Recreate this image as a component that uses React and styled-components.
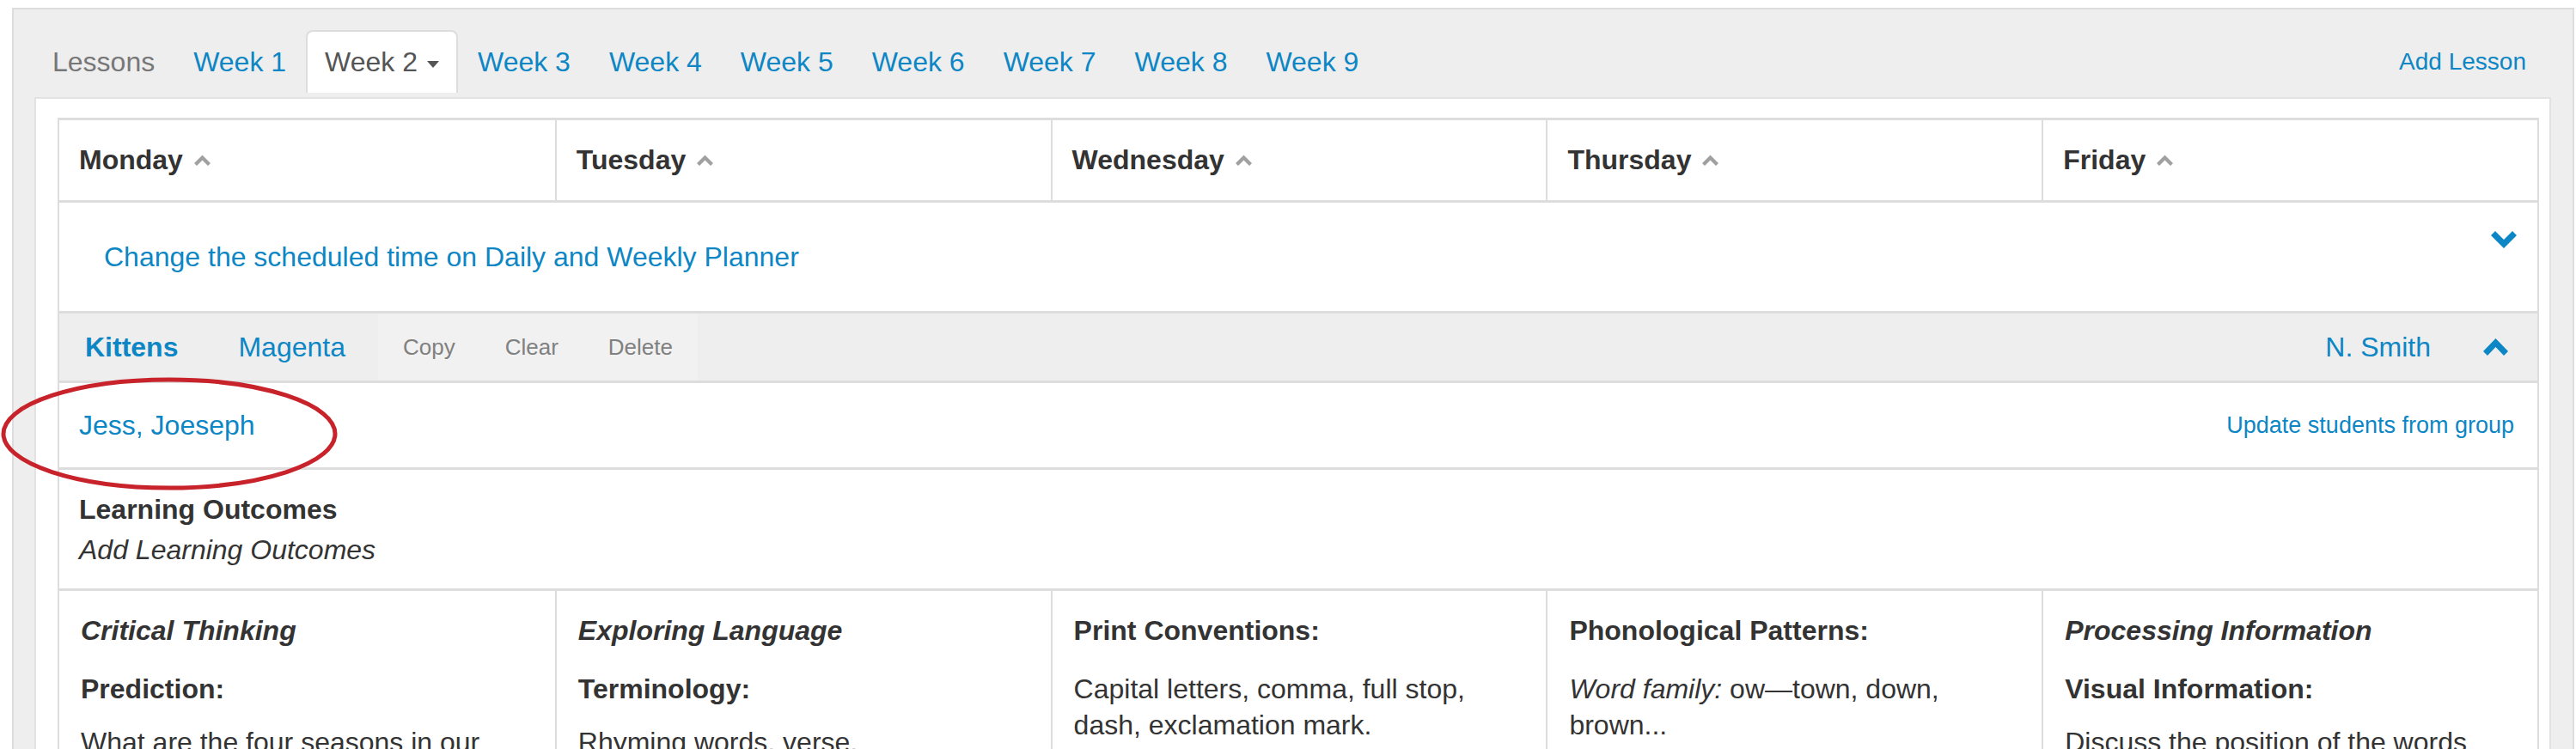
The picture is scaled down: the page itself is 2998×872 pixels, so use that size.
import React from "react";
import styled, { createGlobalStyle } from "styled-components";

const GlobalStyle = createGlobalStyle`
  *, *::before, *::after {
    box-sizing: border-box;
  }
  html, body {
    margin: 0;
    padding: 0;
    background: #ffffff;
    overflow: hidden;
  }
  body {
    font-family: "Liberation Sans", Arial, Helvetica, sans-serif;
    color: #333333;
  }
`;

const BLUE = "#0c86c4";

const Page = styled.div`
  position: relative;
  height: 872px;
  overflow: hidden;
  padding: 9px 2px 0 14px;
`;

const Well = styled.div`
  min-height: 100%;
  background: #eeeeee;
  border: 2px solid #dddddd;
  border-bottom: none;
  padding-top: 24px;
`;

const TabBar = styled.ul`
  display: flex;
  align-items: stretch;
  height: 73px;
  margin: 0 0 5px;
  padding: 0 54px 0 23px;
  list-style: none;
`;

const Tab = styled.li`
  display: flex;
  align-items: center;
  padding: 0 20px;
  margin-right: 1px;
  border: 2px solid ${(p) => (p.$active ? "#dddddd" : "transparent")};
  border-bottom: none;
  border-radius: 8px 8px 0 0;
  background: ${(p) => (p.$active ? "#ffffff" : "transparent")};
  font-size: 32px;
  color: ${(p) => (p.$active ? "#555555" : p.$muted ? "#777777" : BLUE)};
`;

const Caret = styled.span`
  display: inline-block;
  margin: 4px 0 0 11px;
  border-top: 8px solid #555555;
  border-left: 7px solid transparent;
  border-right: 7px solid transparent;
`;

const AddLesson = styled.li`
  margin-left: auto;
  display: flex;
  align-items: center;
  font-size: 28px;
  color: ${BLUE};
`;

const Panel = styled.div`
  background: #ffffff;
  border: 2px solid #e2e2e2;
  border-bottom: none;
  margin: 0 25px 0 24px;
  padding: 22px 12px 0 25px;
`;

const Planner = styled.div`
  border: 2px solid #dddddd;
  border-top-width: 3px;
`;

const DayHeader = styled.div`
  display: grid;
  grid-template-columns: repeat(5, 1fr);
  height: 93px;
`;

const DayCell = styled.div`
  display: flex;
  align-items: center;
  gap: 13px;
  padding: 0 23px;
  font-size: 32px;
  font-weight: bold;
  color: #333333;
  & + & {
    border-left: 2px solid #dddddd;
  }
`;

const ScheduleRow = styled.div`
  display: flex;
  align-items: center;
  justify-content: space-between;
  height: 129px;
  border-top: 3px solid #dddddd;
  padding: 0 24px 0 52px;
  font-size: 32px;
  color: ${BLUE};
`;

const Toggle = styled.span`
  align-self: flex-start;
  margin-top: 32px;
  display: flex;
`;

const GroupBar = styled.div`
  display: flex;
  align-items: stretch;
  height: 81px;
  border-top: 3px solid #dddddd;
  background: #eeeeee;
  padding: 0 34px 0 30px;
  font-size: 32px;
  color: ${BLUE};
`;

const GroupName = styled.span`
  display: flex;
  align-items: center;
  font-weight: ${(p) => (p.$strong ? "bold" : "normal")};
  margin-right: ${(p) => p.$gap}px;
`;

const Actions = styled.div`
  display: flex;
  background: #f1f1f1;
`;

const ActionButton = styled.span`
  display: flex;
  align-items: center;
  padding: 0 29px;
  font-size: 26px;
  color: #808080;
`;

const Teacher = styled.span`
  margin-left: auto;
  display: flex;
  align-items: center;
  gap: 61px;
`;

const StudentsRow = styled.div`
  display: flex;
  align-items: center;
  justify-content: space-between;
  height: 101px;
  border-top: 3px solid #dddddd;
  padding: 0 27px 0 23px;
  font-size: 32px;
  color: ${BLUE};
`;

const SmallLink = styled.span`
  font-size: 27px;
`;

const OutcomesRow = styled.div`
  height: 141px;
  border-top: 3px solid #dddddd;
  padding: 25px 23px 0;
  font-size: 32px;
  line-height: 42px;
`;

const OutcomesTitle = styled.div`
  font-weight: bold;
  margin-bottom: 5px;
`;

const LessonGrid = styled.div`
  display: grid;
  grid-template-columns: repeat(5, 1fr);
  border-top: 3px solid #dddddd;
`;

const LessonCell = styled.div`
  padding: 25px 25px 40px;
  font-size: 32px;
  line-height: 42px;
  color: #333333;
  & + & {
    border-left: 2px solid #dddddd;
  }
`;

const Strand = styled.p`
  margin: 0 0 26px;
  font-weight: bold;
  font-style: ${(p) => (p.$italic ? "italic" : "normal")};
`;

const Focus = styled.p`
  margin: 0 0 20px;
  font-weight: bold;
`;

const Body = styled.p`
  margin: 0;
`;

const Annotation = styled.svg`
  position: absolute;
  left: 0;
  top: 438px;
  pointer-events: none;
`;

const SortArrow = () => (
  <svg width="19" height="15" viewBox="0 0 19 15">
    <polygon points="0,11 9.5,1.5 19,11 16,14 9.5,7.5 3,14" fill="#a0a0a0" />
  </svg>
);

const ChevronDown = () => (
  <svg width="30" height="21" viewBox="0 0 30 21">
    <polygon points="0,6 5,1 15,11 25,1 30,6 15,21" fill={BLUE} />
  </svg>
);

const ChevronUp = () => (
  <svg width="29" height="21" viewBox="0 0 29 21">
    <polygon points="0,15 14.5,0 29,15 24,20 14.5,10 5,20" fill={BLUE} />
  </svg>
);

const days = ["Monday", "Tuesday", "Wednesday", "Thursday", "Friday"];
const weeks = [1, 2, 3, 4, 5, 6, 7, 8, 9];

export default function App() {
  return (
    <Page>
      <GlobalStyle />
      <Well>
        <TabBar>
          <Tab $muted>Lessons</Tab>
          {weeks.map((w) => (
            <Tab key={w} $active={w === 2}>
              Week {w}
              {w === 2 && <Caret />}
            </Tab>
          ))}
          <AddLesson>Add Lesson</AddLesson>
        </TabBar>
        <Panel>
          <Planner>
            <DayHeader>
              {days.map((d) => (
                <DayCell key={d}>
                  {d}
                  <SortArrow />
                </DayCell>
              ))}
            </DayHeader>
            <ScheduleRow>
              <span>Change the scheduled time on Daily and Weekly Planner</span>
              <Toggle>
                <ChevronDown />
              </Toggle>
            </ScheduleRow>
            <GroupBar>
              <GroupName $strong $gap={70}>Kittens</GroupName>
              <GroupName $gap={38}>Magenta</GroupName>
              <Actions>
                <ActionButton>Copy</ActionButton>
                <ActionButton>Clear</ActionButton>
                <ActionButton>Delete</ActionButton>
              </Actions>
              <Teacher>
                N. Smith
                <ChevronUp />
              </Teacher>
            </GroupBar>
            <StudentsRow>
              <span>Jess, Joeseph</span>
              <SmallLink>Update students from group</SmallLink>
            </StudentsRow>
            <OutcomesRow>
              <OutcomesTitle>Learning Outcomes</OutcomesTitle>
              <em>Add Learning Outcomes</em>
            </OutcomesRow>
            <LessonGrid>
              <LessonCell>
                <Strand $italic>Critical Thinking</Strand>
                <Focus>Prediction:</Focus>
                <Body>What are the four seasons in our country?</Body>
              </LessonCell>
              <LessonCell>
                <Strand $italic>Exploring Language</Strand>
                <Focus>Terminology:</Focus>
                <Body>
                  Rhyming words, verse,
                  <br />
                  stanza, rhythm.
                </Body>
              </LessonCell>
              <LessonCell>
                <Strand>Print Conventions:</Strand>
                <Body>Capital letters, comma, full stop, dash, exclamation mark.</Body>
              </LessonCell>
              <LessonCell>
                <Strand>Phonological Patterns:</Strand>
                <Body>
                  <em>Word family:</em> ow—town, down, brown...
                </Body>
              </LessonCell>
              <LessonCell>
                <Strand $italic>Processing Information</Strand>
                <Focus>Visual Information:</Focus>
                <Body>Discuss the position of the words relative to the pictures.</Body>
              </LessonCell>
            </LessonGrid>
          </Planner>
        </Panel>
      </Well>
      <Annotation width="396" height="136" viewBox="0 0 396 136">
        <ellipse cx="197" cy="67" rx="193" ry="63" fill="none" stroke="#c8232b" strokeWidth="5" />
      </Annotation>
    </Page>
  );
}
